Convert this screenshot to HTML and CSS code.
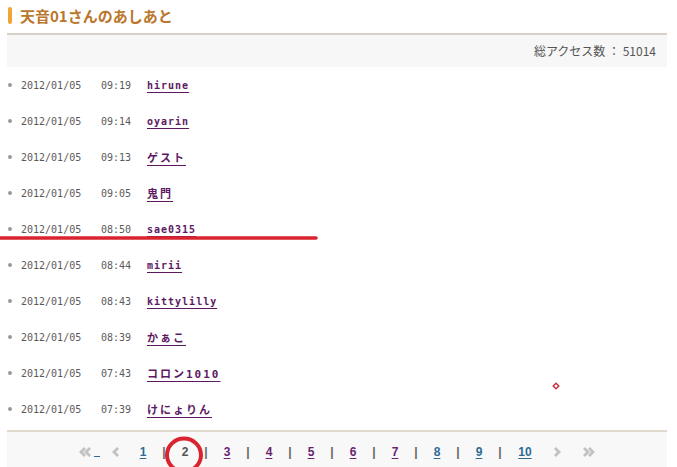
FILE: index.html
```html
<!DOCTYPE html>
<html lang="ja">
<head>
  <meta charset="UTF-8" />
  <meta name="viewport" content="width=device-width, initial-scale=1.0" />
  <title>天音01さんのあしあと</title>
  <link rel="stylesheet" href="styles.css">
</head>
<body>
  <div class="page">
    <h2 class="heading"><span class="heading-bar"></span>天音01さんのあしあと</h2>
    <div class="total">総アクセス数 ： 51014</div>

    <ul class="visits">
      <li><span class="date">2012/01/05</span><span class="time">09:19</span><a class="name" href="#">hirune</a></li>
      <li><span class="date">2012/01/05</span><span class="time">09:14</span><a class="name" href="#">oyarin</a></li>
      <li><span class="date">2012/01/05</span><span class="time">09:13</span><a class="name jp" href="#">ゲスト</a></li>
      <li><span class="date">2012/01/05</span><span class="time">09:05</span><a class="name jp" href="#">鬼門</a></li>
      <li><span class="date">2012/01/05</span><span class="time">08:50</span><a class="name" href="#">sae0315</a></li>
      <li><span class="date">2012/01/05</span><span class="time">08:44</span><a class="name" href="#">mirii</a></li>
      <li><span class="date">2012/01/05</span><span class="time">08:43</span><a class="name" href="#">kittylilly</a></li>
      <li><span class="date">2012/01/05</span><span class="time">08:39</span><a class="name jp" href="#">かぁこ</a></li>
      <li><span class="date">2012/01/05</span><span class="time">07:43</span><a class="name jp" href="#">コロン1010</a></li>
      <li><span class="date">2012/01/05</span><span class="time">07:39</span><a class="name jp" href="#">けにょりん</a></li>
    </ul>

    <div class="pager">
      <a class="pg first" href="#">
        <svg width="14" height="10" viewBox="0 0 14 10"><path d="M6 1 L2 5 L6 9 M11 1 L7 5 L11 9" fill="none" stroke="#c2c2c2" stroke-width="2.8"/></svg><span class="under"></span>
      </a>
      <span class="pg prev">
        <svg width="8" height="10" viewBox="0 0 8 10"><path d="M6 1 L2 5 L6 9" fill="none" stroke="#c2c2c2" stroke-width="2.8"/></svg>
      </span>
      <a class="pg num" href="#">1</a>
      <span class="pg sep">|</span>
      <span class="pg cur">2</span>
      <span class="pg sep">|</span>
      <a class="pg num seen" href="#">3</a>
      <span class="pg sep">|</span>
      <a class="pg num seen" href="#">4</a>
      <span class="pg sep">|</span>
      <a class="pg num seen" href="#">5</a>
      <span class="pg sep">|</span>
      <a class="pg num seen" href="#">6</a>
      <span class="pg sep">|</span>
      <a class="pg num seen" href="#">7</a>
      <span class="pg sep">|</span>
      <a class="pg num" href="#">8</a>
      <span class="pg sep">|</span>
      <a class="pg num" href="#">9</a>
      <span class="pg sep">|</span>
      <a class="pg num wide" href="#">10</a>
      <a class="pg next" href="#">
        <svg width="8" height="10" viewBox="0 0 8 10"><path d="M2 1 L6 5 L2 9" fill="none" stroke="#c2c2c2" stroke-width="2.8"/></svg>
      </a>
      <a class="pg last" href="#">
        <svg width="14" height="10" viewBox="0 0 14 10"><path d="M3 1 L7 5 L3 9 M8 1 L12 5 L8 9" fill="none" stroke="#c2c2c2" stroke-width="2.8"/></svg>
      </a>
    </div>
  </div>

  <!-- hand-drawn marks over the screenshot -->
  <svg class="marks" width="677" height="467" viewBox="0 0 677 467">
    <line x1="-4" y1="238" x2="316" y2="238" stroke="#d9232e" stroke-width="3.5" stroke-linecap="round"/>
    <ellipse cx="184" cy="455" rx="17" ry="16.5" fill="none" stroke="#d9232e" stroke-width="4"/>
    <rect x="554" y="384" width="4" height="4" fill="#fff" stroke="#c8303a" stroke-width="1.4" transform="rotate(45 556 386)"/>
  </svg>
</body>
</html>
```

FILE: styles.css
```css
* {
  margin: 0;
  padding: 0;
  box-sizing: border-box;
}
body {
  background-color: #fff;
  font-family: "DejaVu Sans Mono", "Noto Sans CJK JP", monospace;
  overflow: hidden;
}
.page {
  width: 660px;
  margin-left: 7px;
}
.heading {
  display: flex;
  align-items: center;
  height: 35px;
  padding: 0 0 3px 1px;
  font-family: "Noto Sans CJK JP", sans-serif;
  font-size: 15px;
  font-weight: bold;
  color: #bb772c;
  border-bottom: 2px solid #d6d0c7;
}
.heading-bar {
  width: 4px;
  height: 17px;
  margin-right: 8px;
  border-radius: 2px;
  background-color: #f0a534;
}
.total {
  height: 32px;
  line-height: 32px;
  padding-right: 11px;
  text-align: right;
  background-color: #f7f7f7;
  font-family: "Noto Sans CJK JP", sans-serif;
  font-size: 12px;
  color: #555;
}
.visits {
  list-style: none;
}
.visits li {
  display: flex;
  align-items: center;
  height: 36px;
  font-size: 10px;
  color: #5a5a5a;
}
.visits li:before {
  content: "";
  width: 4px;
  height: 4px;
  margin: 0 9px 0 1px;
  border-radius: 50%;
  background-color: #9a9a9a;
}
.date {
  width: 60px;
}
.time {
  width: 30px;
  margin-left: 20px;
}
.name {
  margin-left: 16px;
  font-weight: bold;
  letter-spacing: 1px;
  color: #5c1962;
  text-decoration: underline;
  text-underline-offset: 3px;
}
.name.jp {
  font-size: 11px;
  letter-spacing: 2px;
}
.pager {
  display: flex;
  justify-content: center;
  align-items: center;
  height: 40px;
  margin-top: 3px;
  padding: 2px 0 0 4px;
  border-top: 2px solid #e0dacd;
  background-color: #f8f8f8;
  font-family: "Liberation Sans", Arial, sans-serif;
  font-size: 12px;
  font-weight: bold;
}
.pg {
  display: flex;
  justify-content: center;
  align-items: center;
  width: 21px;
  text-decoration: none;
}
.first {
  width: 23px;
  padding-left: 2px;
}
.first .under {
  width: 6px;
  height: 1px;
  margin: 9px 0 0 1px;
  background-color: #2d6d95;
}
.prev {
  width: 33px;
}
.next {
  width: 35px;
}
.last {
  width: 27px;
}
.num {
  color: #2d6d95;
  text-decoration: underline;
  text-underline-offset: 2px;
}
.num.seen {
  color: #6b1f70;
}
.num.wide {
  width: 29px;
}
.sep {
  color: #666;
}
.cur {
  color: #555;
}
.marks {
  position: absolute;
  top: 0;
  left: 0;
  pointer-events: none;
}
```
